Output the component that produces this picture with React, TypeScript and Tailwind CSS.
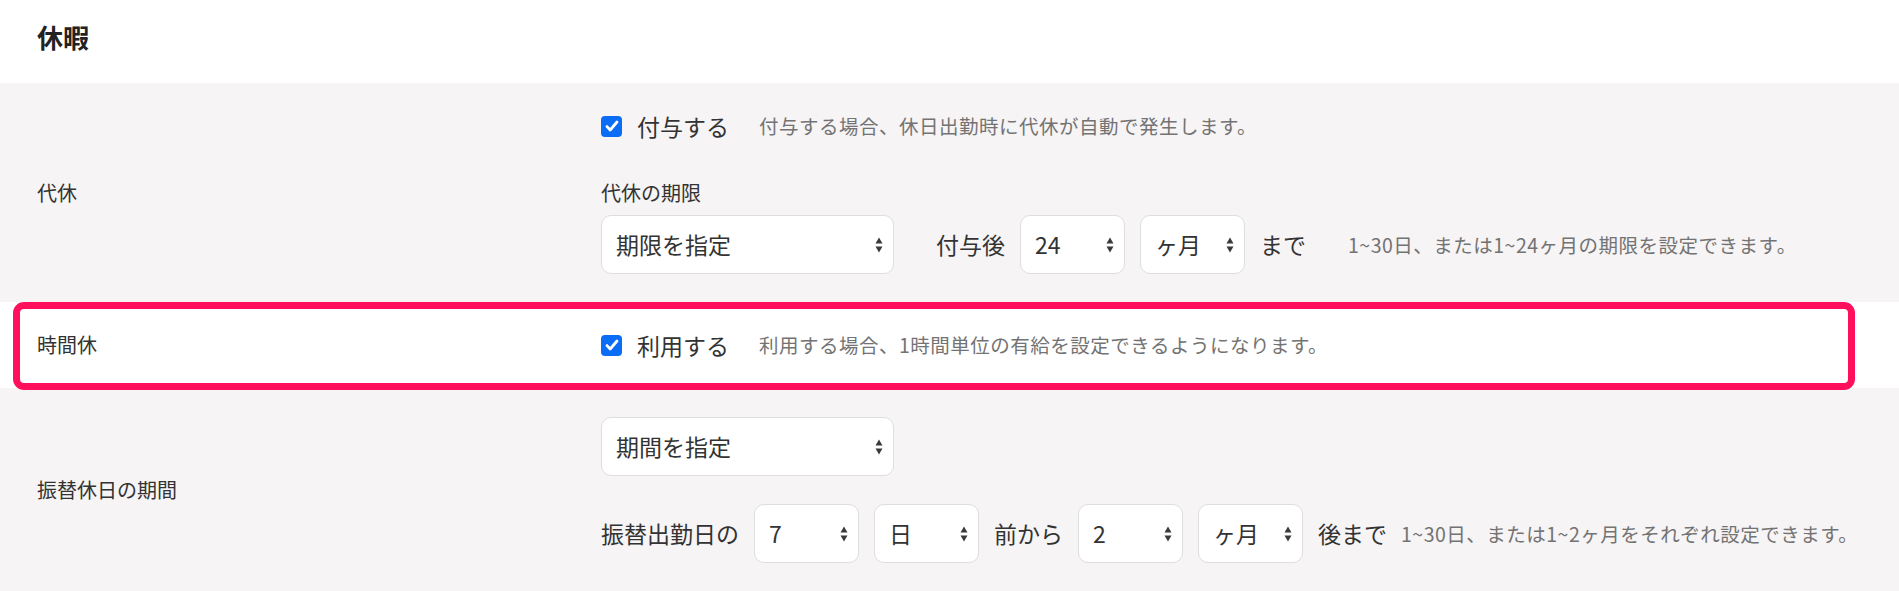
import React from "react";

const Checkbox = () => (
  <span className="flex h-[21px] w-[21px] shrink-0 items-center justify-center rounded-[4px] bg-[#0b6cf5]">
    <svg width="16" height="16" viewBox="0 0 16 16" fill="none">
      <path d="M3 8.6l3.2 3.4L13 4" stroke="white" strokeWidth="2.8" strokeLinecap="round" strokeLinejoin="round" />
    </svg>
  </span>
);

const Arrows = () => (
  <svg width="8" height="16" viewBox="0 0 8 16" className="pointer-events-none absolute right-[11px] top-1/2 -translate-y-1/2">
    <path d="M4 0.5L7.5 6.5H0.5Z" fill="#3a3a3a" />
    <path d="M4 15.5L7.5 9.5H0.5Z" fill="#3a3a3a" />
  </svg>
);

type SelectProps = {
  value: string;
  options: string[];
  width: string;
};

const Select = ({ value, options, width }: SelectProps) => (
  <div className={`relative shrink-0 ${width}`}>
    <select
      defaultValue={value}
      className="h-[59px] w-full appearance-none rounded-[10px] border border-[#dedede] bg-white pl-[14px] pr-[30px] text-[23px] text-[#333]"
    >
      {options.map((o) => (
        <option key={o} value={o}>
          {o}
        </option>
      ))}
    </select>
    <Arrows />
  </div>
);

const Hint = ({ children, className = "" }: { children: React.ReactNode; className?: string }) => (
  <span className={`text-[19.5px] tracking-[0.5px] text-[#737373] ${className}`}>{children}</span>
);

export default function App() {
  return (
    <div
      className="h-[591px] w-[1899px] overflow-hidden bg-white text-[#333]"
      style={{ fontFamily: '"Noto Sans CJK JP", "Noto Sans", sans-serif' }}
    >
      {/* title */}
      <div className="h-[83px] pl-[37px] pt-[19px] text-[26px] font-bold leading-[36px] text-[#222]">休暇</div>

      {/* 代休 */}
      <div className="flex items-center bg-[#f6f4f5] pb-[28px] pt-[28px]">
        <div className="w-[601px] shrink-0 pl-[37px] text-[20px] leading-[28px]">代休</div>
        <div className="flex flex-col">
          <div className="flex h-[30px] items-center">
            <Checkbox />
            <span className="ml-[15px] text-[23px] leading-[30px]">付与する</span>
            <Hint className="ml-[30px]">付与する場合、休日出勤時に代休が自動で発生します。</Hint>
          </div>
          <div className="mt-[40px] text-[20px] leading-[24px]">代休の期限</div>
          <div className="mt-[10px] flex items-center gap-[15px]">
            <Select value="期限を指定" options={["期限を指定", "無期限"]} width="w-[293px]" />
            <span className="ml-[27px] text-[23px]">付与後</span>
            <Select value="24" options={["24"]} width="w-[105px]" />
            <Select value="ヶ月" options={["ヶ月", "日"]} width="w-[105px]" />
            <span className="text-[23px]">まで</span>
            <Hint className="ml-[27px]">1~30日、または1~24ヶ月の期限を設定できます。</Hint>
          </div>
        </div>
      </div>

      {/* 時間休 */}
      <div className="relative flex h-[86px] items-center bg-white">
        <div className="w-[601px] shrink-0 pl-[37px] text-[20px] leading-[28px]">時間休</div>
        <div className="flex items-center">
          <Checkbox />
          <span className="ml-[15px] text-[23px] leading-[30px]">利用する</span>
          <Hint className="ml-[30px]">利用する場合、1時間単位の有給を設定できるようになります。</Hint>
        </div>
        <div className="pointer-events-none absolute left-[13px] top-0 z-10 h-[88px] w-[1842px] rounded-[11px] border-[7px] border-[#ff0f5c]" />
      </div>

      {/* 振替休日の期間 */}
      <div className="flex items-center bg-[#f6f4f5] pb-[28px] pt-[29px]">
        <div className="w-[601px] shrink-0 pl-[37px] text-[20px] leading-[28px]">振替休日の期間</div>
        <div className="flex flex-col">
          <Select value="期間を指定" options={["期間を指定", "無期限"]} width="w-[293px]" />
          <div className="mt-[28px] flex items-center gap-[15px]">
            <span className="text-[23px]">振替出勤日の</span>
            <Select value="7" options={["7"]} width="w-[105px]" />
            <Select value="日" options={["日", "ヶ月"]} width="w-[105px]" />
            <span className="text-[23px]">前から</span>
            <Select value="2" options={["2"]} width="w-[105px]" />
            <Select value="ヶ月" options={["ヶ月", "日"]} width="w-[105px]" />
            <span className="text-[23px]">後まで</span>
            <Hint className="-ml-[1px]">1~30日、または1~2ヶ月をそれぞれ設定できます。</Hint>
          </div>
        </div>
      </div>
    </div>
  );
}
